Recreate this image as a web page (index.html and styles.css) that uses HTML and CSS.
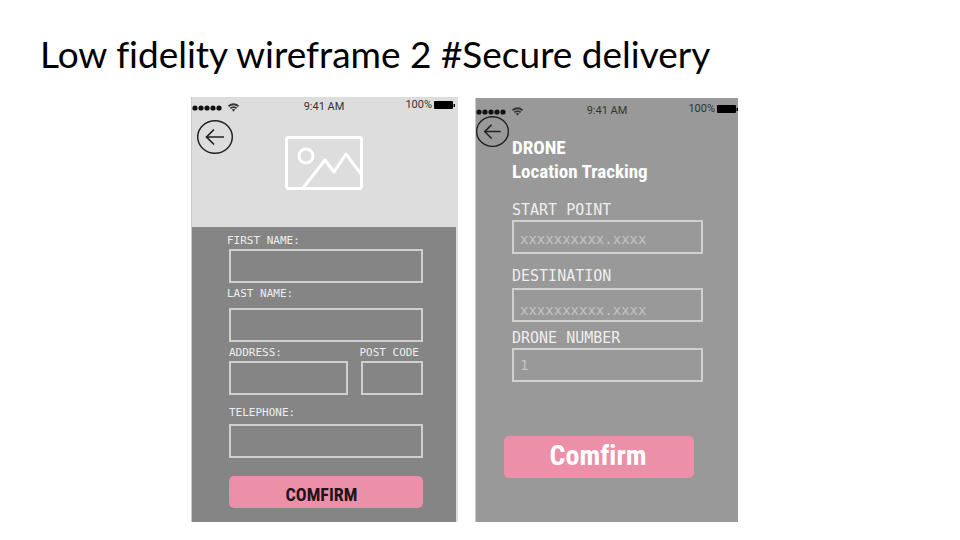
FILE: index.html
```html
<!DOCTYPE html>
<html lang="en">
<head>
<meta charset="utf-8">
<meta name="viewport" content="width=device-width, initial-scale=1">
<title>Low fidelity wireframe 2</title>
<link rel="stylesheet" href="styles.css">
</head>
<body>
<h1 class="title">Low fidelity wireframe 2 #Secure delivery</h1>
<main class="screens">
  <section class="phone phone-form">
    <header class="hero">
      <div class="status">
        <svg class="signal" viewBox="0 0 48 12" aria-hidden="true">
          <g fill="#111"><circle cx="3" cy="7" r="2.6"/><circle cx="9" cy="7" r="2.6"/><circle cx="15" cy="7" r="2.6"/><circle cx="21" cy="7" r="2.6"/><circle cx="27" cy="7" r="2.6"/></g>
          <g fill="none" stroke="#333" stroke-width="1.8"><path d="M36.5 5.2Q41.5 1.2 46.5 5.2"/><path d="M38.3 7.4Q41.5 4.8 44.7 7.4"/></g>
          <path fill="#333" d="M39.8 8.6Q41.5 7.4 43.2 8.6L41.5 10.8Z"/>
        </svg>
        <span class="time">9:41 AM</span>
        <span class="battery">100%
          <svg viewBox="0 0 21 8" aria-hidden="true"><rect width="19" height="8" rx="1"/><rect x="19.5" y="3" width="1.5" height="3"/></svg>
        </span>
      </div>
      <button class="back" type="button" aria-label="Back">
        <svg viewBox="0 0 36 34" fill="none" stroke="#222" aria-hidden="true"><ellipse cx="18" cy="17" rx="17.3" ry="16.2" stroke-width="1.5"/><path d="M27 17H9.5M17 9.5L9.5 17L17 24.5" stroke-width="1.7"/></svg>
      </button>
      <svg class="photo" viewBox="0 0 78 54" fill="none" stroke="#fff" stroke-width="3" stroke-linejoin="round" aria-hidden="true">
        <rect x="1.5" y="1.5" width="75" height="51" rx="2"/><circle cx="21" cy="20" r="7"/><path d="M18 52L40 24L49 36L61 18L76 38"/>
      </svg>
    </header>
    <form class="form">
      <div class="field first"><label for="first">FIRST NAME:</label><input id="first" type="text"></div>
      <div class="field last"><label for="last">LAST NAME:</label><input id="last" type="text"></div>
      <div class="pair">
        <div class="field"><label for="address">ADDRESS:</label><input id="address" type="text"></div>
        <div class="field postcode"><label for="post">POST CODE</label><input id="post" type="text"></div>
      </div>
      <div class="field"><label for="tel">TELEPHONE:</label><input id="tel" type="tel"></div>
      <button class="confirm" type="button">COMFIRM</button>
    </form>
  </section>
  <section class="phone phone-track">
    <div class="status">
      <svg class="signal" viewBox="0 0 48 12" aria-hidden="true">
        <g fill="#111"><circle cx="3" cy="7" r="2.6"/><circle cx="9" cy="7" r="2.6"/><circle cx="15" cy="7" r="2.6"/><circle cx="21" cy="7" r="2.6"/><circle cx="27" cy="7" r="2.6"/></g>
        <g fill="none" stroke="#333" stroke-width="1.8"><path d="M36.5 5.2Q41.5 1.2 46.5 5.2"/><path d="M38.3 7.4Q41.5 4.8 44.7 7.4"/></g>
        <path fill="#333" d="M39.8 8.6Q41.5 7.4 43.2 8.6L41.5 10.8Z"/>
      </svg>
      <span class="time">9:41 AM</span>
      <span class="battery">100%
        <svg viewBox="0 0 21 8" aria-hidden="true"><rect width="19" height="8" rx="1"/><rect x="19.5" y="3" width="1.5" height="3"/></svg>
      </span>
    </div>
    <div class="heading">
      <button class="back" type="button" aria-label="Back">
        <svg viewBox="0 0 36 34" fill="none" stroke="#222" aria-hidden="true"><ellipse cx="18" cy="17" rx="17.3" ry="16.2" stroke-width="1.5"/><path d="M27 17H9.5M17 9.5L9.5 17L17 24.5" stroke-width="1.7"/></svg>
      </button>
      <h2>DRONE<br>Location Tracking</h2>
    </div>
    <form class="form">
      <div class="field start"><label for="start">START POINT</label><input id="start" type="text" placeholder="xxxxxxxxxx.xxxx"></div>
      <div class="field destination"><label for="dest">DESTINATION</label><input id="dest" type="text" placeholder="xxxxxxxxxx.xxxx"></div>
      <div class="field"><label for="drone">DRONE NUMBER</label><input id="drone" type="text" placeholder="1"></div>
      <button class="confirm" type="button">Comfirm</button>
    </form>
  </section>
</main>
</body>
</html>
```
FILE: styles.css
```css
* {
  box-sizing: border-box;
}

body {
  margin: 0;
  background: #fff;
  color: #000;
  font-family: Lato, "Open Sans", sans-serif;
  font-variant-ligatures: none;
}

.title {
  margin: 0;
  padding: 30px 40px 19px;
  font-size: 37px;
  font-weight: 400;
  line-height: 48px;
}

.screens {
  display: grid;
  grid-template-columns: minmax(0, 267px) minmax(0, 263px);
  justify-content: center;
  align-items: stretch;
  gap: 17px;
  padding-right: 31px;
}

.phone {
  padding-bottom: 14px;
  border-left: 1px solid #c8c8c8;
}

.phone-form {
  background: #858585;
  border-right: 2px solid #ddd;
}

.phone-track {
  margin-top: 1px;
  background: #999;
}

.hero {
  position: relative;
  padding-bottom: 37px;
  background: #ddd;
}

.status {
  display: grid;
  grid-template-columns: 1fr auto 1fr;
  align-items: center;
  height: 18px;
  color: #333;
  font: 11px/16px Roboto, sans-serif;
}

.signal {
  width: 48px;
  height: 12px;
}

.battery {
  display: flex;
  align-items: center;
  justify-content: flex-end;
  gap: 2px;
  margin-bottom: 4px;
}

.phone-form .battery {
  padding-right: 1px;
}

.battery svg {
  width: 21px;
  height: 8px;
  fill: #000;
}

.phone-track .status {
  padding-top: 3px;
}

.back {
  display: block;
  width: 36px;
  padding: 0;
  border: 0;
  background: none;
}

.back svg {
  display: block;
  width: 100%;
}

.hero .back {
  position: absolute;
  top: 23px;
  left: 5px;
}

.photo {
  display: block;
  width: 78px;
  height: 54px;
  margin: 21px auto 0;
}

.form {
  display: flex;
  flex-direction: column;
}

.phone-form .form {
  padding: 6px 33px 0 37px;
}

.field {
  display: flex;
  flex-direction: column;
  min-width: 0;
}

label {
  color: #eee;
  font: 11px/16px "DejaVu Sans Mono", monospace;
  white-space: nowrap;
}

input {
  width: 100%;
  height: 34px;
  padding: 0 6px;
  border: 2px solid #d0d0d0;
  border-radius: 0;
  background: transparent;
  color: #eee;
  font: 14px/20px "DejaVu Sans Mono", monospace;
}

input::placeholder {
  color: #c4c4c4;
  opacity: 1;
}

.phone-form .first,
.phone-form .last {
  margin-left: -2px;
}

.phone-form .first input,
.phone-form .last input {
  align-self: flex-end;
  width: calc(100% - 2px);
}

.phone-form .first {
  margin-bottom: 3px;
}

.phone-form .last {
  gap: 6px;
  margin-bottom: 3px;
}

.pair {
  display: grid;
  grid-template-columns: 1fr 62px;
  gap: 13px;
  margin-bottom: 10px;
}

.postcode label {
  align-self: flex-end;
  margin-right: 4px;
}

.phone-form .form > .field:nth-of-type(4) {
  gap: 3px;
}

.confirm {
  border: 0;
  border-radius: 5px;
  background: #ec8fa9;
  font-family: "Liberation Sans Narrow", "Roboto Condensed", sans-serif;
  font-weight: 700;
  font-variant-ligatures: none;
}

.phone-form .confirm {
  height: 32px;
  margin-top: 18px;
  padding: 4px 9px 0 0;
  color: #21151a;
  font-size: 18px;
}

.heading {
  display: flex;
  align-items: flex-start;
}

.heading .back {
  width: 33px;
}

.heading h2 {
  margin: 20px 0 16px 3px;
  color: #fff;
  font: 700 19px/24px "Liberation Sans Narrow", "Roboto Condensed", sans-serif;
}

.phone-track .form {
  padding: 0 35px 0 36px;
}

.phone-track label {
  font-size: 15px;
  line-height: 20px;
}

.start {
  margin-bottom: 12px;
}

.start input {
  padding-top: 4px;
}

.destination {
  margin-bottom: 6px;
}

.destination input {
  margin-top: 2px;
  padding-top: 10px;
}

.phone-track .confirm {
  height: 42px;
  margin: 54px 9px 0 -8px;
  padding: 0 2px 4px 0;
  color: #fff;
  font-size: 28px;
}
```
